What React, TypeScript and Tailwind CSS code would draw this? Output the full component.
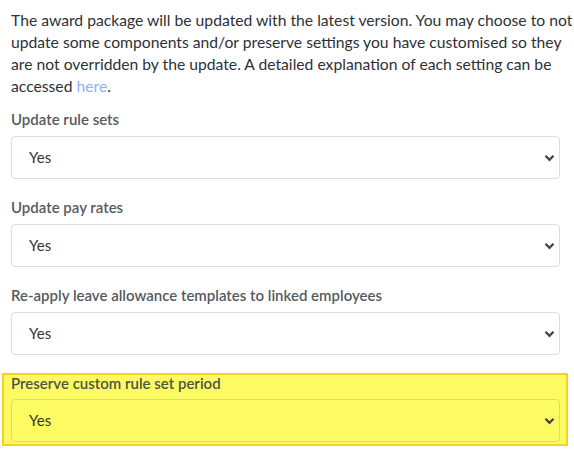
import React from "react";

const fields = [
    { label: "Update rule sets", value: "Yes" },
    { label: "Update pay rates", value: "Yes" },
    { label: "Re-apply leave allowance templates to linked employees", value: "Yes" },
];

const Chevron = () => (
    <svg width="11" height="8" viewBox="0 0 11 8" className="absolute right-[4px] top-1/2 -translate-y-1/2">
        <path d="M1.5 1.8 L5.5 5.8 L9.5 1.8" fill="none" stroke="#444" strokeWidth="2.3" />
    </svg>
);

const Select = ({ value, tinted }: { value: string; tinted?: boolean }) => (
    <div
        className={`relative flex h-[43px] w-[549px] items-center rounded-[4px] border pl-[17px] text-[15px] text-[#333] ${
            tinted ? "border-[#e0dc5c] bg-transparent" : "border-[#d9dee2] bg-white"
        }`}
    >
        {value}
        <Chevron />
    </div>
);

export default function App() {
    return (
        <div
            className="w-[574px] h-[451px] bg-white pt-[9px] pl-[11px] text-[#2d3136]"
            style={{ fontFamily: "Lato, 'Liberation Sans', sans-serif" }}
        >
            <p className="whitespace-nowrap text-[15.7px] leading-[22px]">
                The award package will be updated with the latest version. You may choose to not
                <br />
                update some components and/or preserve settings you have customised so they
                <br />
                are not overridden by the update. A detailed explanation of each setting can be
                <br />
                accessed <a className="text-[#8fb2f4]">here</a>.
            </p>
            <div className="mt-[12px] flex flex-col gap-[18px]">
                {fields.map((f, i) => (
                    <div key={i} className="flex flex-col">
                        <label className="mb-[7px] text-[15px] leading-[20px] font-semibold text-[#555a5f]">
                            {f.label}
                        </label>
                        <Select value={f.value} />
                    </div>
                ))}
                {/* highlighted setting */}
                <div className="-ml-[9px] w-[566px] border-2 border-[#f6d21a] bg-[#fdfb64] pl-[7px] pb-[2px]">
                    <label className="block mb-[7px] text-[15px] leading-[17px] font-semibold text-[#4f5448]">
                        Preserve custom rule set period
                    </label>
                    <Select value="Yes" tinted />
                </div>
            </div>
        </div>
    );
}
